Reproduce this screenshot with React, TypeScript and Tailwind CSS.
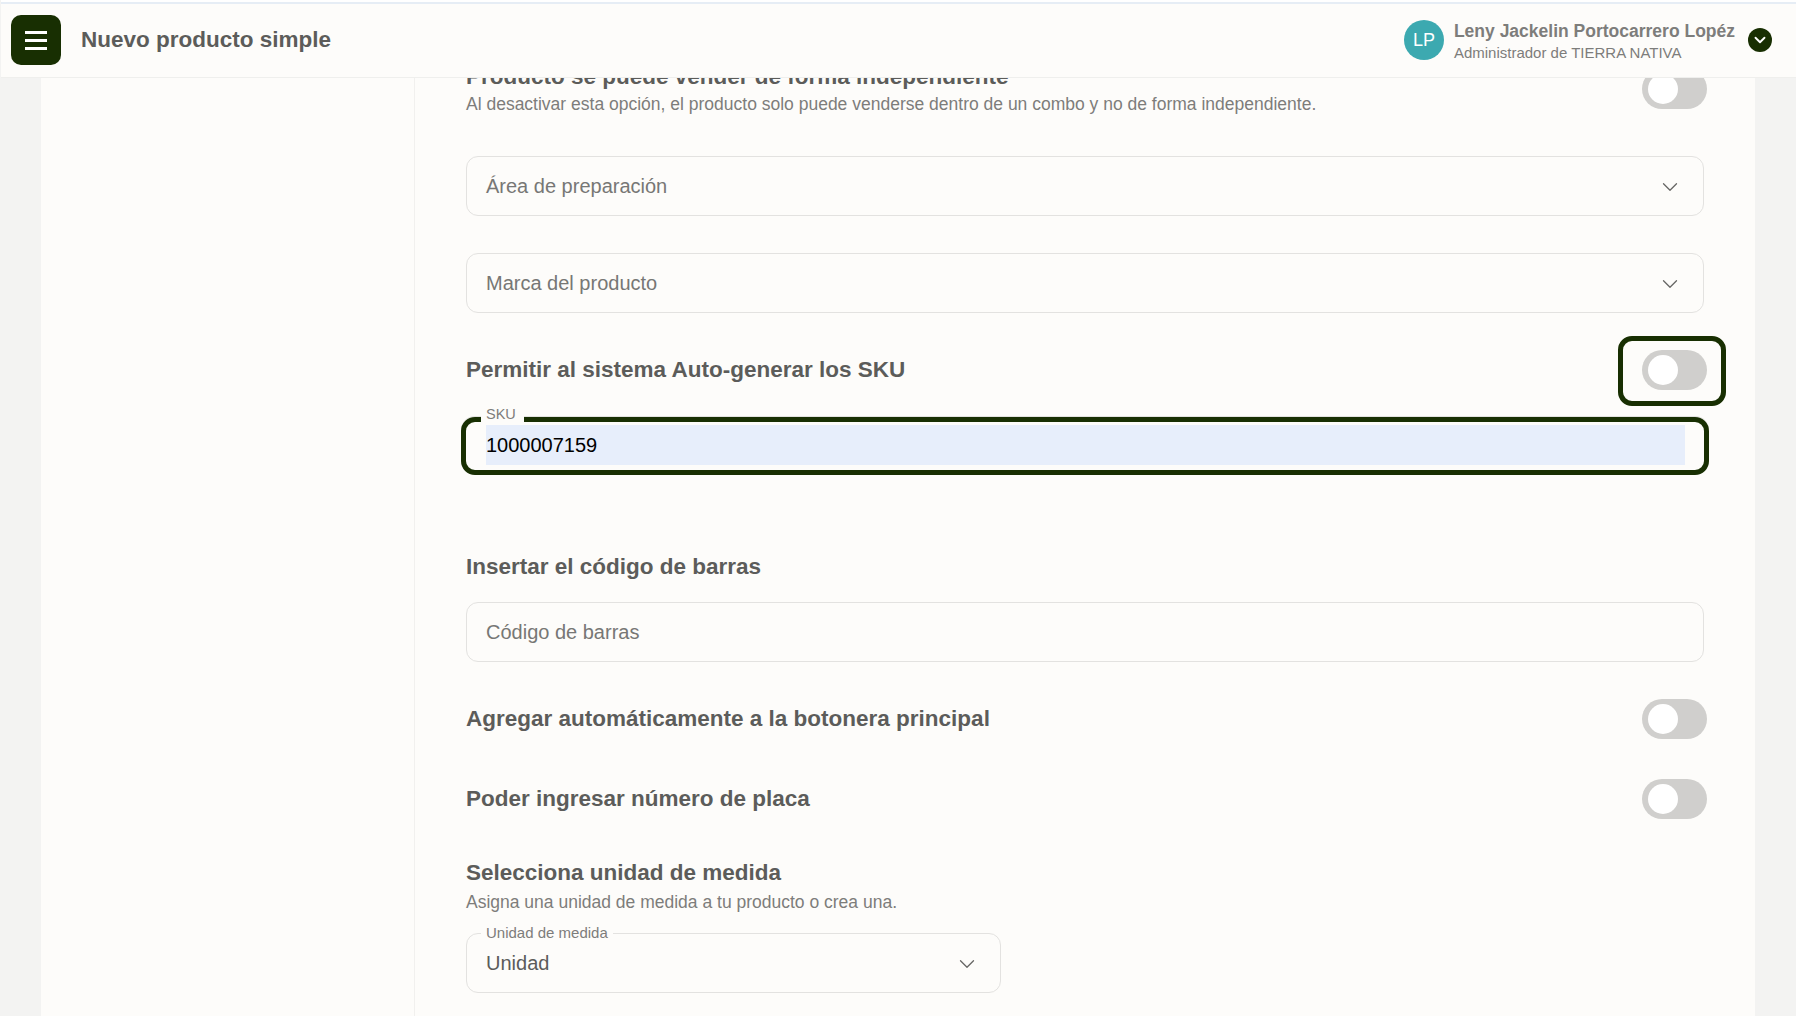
import { ChevronDown } from 'lucide-react'

const dark = 'bg-[#182f02]'

function Toggle() {
  return (
    <div className="flex h-[40px] w-[65px] shrink-0 items-center rounded-full bg-[#d0cfcd] pl-[6px]">
      <span className="h-[30px] w-[30px] rounded-full bg-white" />
    </div>
  )
}

function Heading({ children }: { children: React.ReactNode }) {
  return <h3 className="text-[22.5px] leading-[28px] font-bold text-[#5c5c5a]">{children}</h3>
}

function Note({ children }: { children: React.ReactNode }) {
  return <p className="text-[17.5px] leading-[22px] text-[#7d7d7b]">{children}</p>
}

function SelectBox({ label, className = '' }: { label: string; className?: string }) {
  return (
    <div className={`flex h-[60px] items-center justify-between rounded-[12px] border border-[#e3e2e0] pr-[20px] pl-[19px] ${className}`}>
      <span className="text-[20px] text-[#777775]">{label}</span>
      <ChevronDown size={26} strokeWidth={1.2} className="mt-[2px] text-[#666664]" />
    </div>
  )
}

export default function App() {
  return (
    <div className="flex h-screen flex-col overflow-hidden bg-[#f3f3f2] pl-[1px] font-['Liberation_Sans',Arial,sans-serif]">
      <header className="relative z-10 flex h-[78px] shrink-0 items-center border-t-[2px] border-b border-t-white border-b-[#efefed] bg-[#fdfcfa] pt-[1px] pr-[24px] pl-[10px] shadow-[inset_0_2px_0_#e6edf5]">
        <button type="button" className={`flex h-[50px] w-[50px] flex-col items-center justify-center gap-[5px] rounded-[10px] ${dark}`}>
          <span className="h-[3px] w-[22px] bg-white" />
          <span className="h-[3px] w-[22px] bg-white" />
          <span className="h-[3px] w-[22px] bg-white" />
        </button>
        <h1 className="ml-[20px] flex-1 text-[22.5px] font-bold text-[#5c5c5a]">Nuevo producto simple</h1>
        <div className="flex h-[40px] w-[40px] items-center justify-center rounded-full bg-[#3ca9b0] text-[18px] text-white">LP</div>
        <div className="ml-[10px] pt-[2px]">
          <div className="text-[17.5px] leading-[22px] font-bold text-[#7d7d7b]">Leny Jackelin Portocarrero Lopéz</div>
          <div className="text-[15px] leading-[21px] text-[#7d7d7b]">Administrador de TIERRA NATIVA</div>
        </div>
        <div className={`ml-[13px] flex h-[24px] w-[24px] items-center justify-center rounded-full ${dark}`}>
          <ChevronDown size={18} strokeWidth={2.5} className="text-white" />
        </div>
      </header>

      <div className="mr-[41px] ml-[40px] flex flex-1 bg-[#fdfcfa]">
        <aside className="w-[374px] shrink-0 border-r border-[#f1f0ee]" />
        <main className="-mt-[15px] flex-1 pr-[48px] pl-[51px]">
          <div className="flex justify-between">
            <div>
              <Heading>Producto se puede vender de forma independiente</Heading>
              <div className="pt-[2px]">
                <Note>Al desactivar esta opción, el producto solo puede venderse dentro de un combo y no de forma independiente.</Note>
              </div>
            </div>
            <div className="mt-[6px]"><Toggle /></div>
          </div>

          <SelectBox label="Área de preparación" className="mt-[41px] mr-[3px]" />
          <SelectBox label="Marca del producto" className="mt-[37px] mr-[3px]" />

          <div className="mt-[37px] flex h-[40px] items-center justify-between">
            <Heading>Permitir al sistema Auto-generar los SKU</Heading>
            <div className="relative"><Toggle />
              <span className="absolute -top-[14px] -right-[19px] -bottom-[16px] -left-[24px] rounded-[14px] border-[5px] border-[#182f02]" />
            </div>
          </div>

          <div className="relative mt-[27px] mr-[-2px] -ml-[5px] h-[58px] rounded-[14px] border-[5px] border-[#182f02] pt-[3px] pr-[19px] pl-[20px] shadow-[0_-1px_0_#e3e2e0]">
            <span className="absolute -top-[16px] left-[15px] bg-[#fdfcfa] pr-[8px] pl-[5px] text-[14.5px] leading-[17px] text-[#7d7d7b]">SKU</span>
            <div className="flex h-[40px] items-center bg-[#e7eefb] text-[20px] text-black">1000007159</div>
          </div>

          <div className="mt-[78px]"><Heading>Insertar el código de barras</Heading></div>
          <div className="mt-[21px] mr-[3px] flex h-[60px] items-center rounded-[12px] border border-[#e3e2e0] pl-[19px] text-[20px] text-[#777775]">Código de barras</div>

          <div className="mt-[37px] flex h-[40px] items-center justify-between">
            <Heading>Agregar automáticamente a la botonera principal</Heading>
            <Toggle />
          </div>
          <div className="mt-[40px] flex h-[40px] items-center justify-between">
            <Heading>Poder ingresar número de placa</Heading>
            <Toggle />
          </div>

          <div className="mt-[40px]"><Heading>Selecciona unidad de medida</Heading></div>
          <div className="pt-[4px]">
            <Note>Asigna una unidad de medida a tu producto o crea una.</Note>
          </div>

          <div className="relative mt-[20px] flex h-[60px] w-[535px] items-center justify-between rounded-[12px] border border-[#e3e2e0] pr-[20px] pl-[19px]">
            <span className="absolute -top-[10px] left-[14px] bg-[#fdfcfa] px-[5px] text-[15px] leading-[17px] text-[#7d7d7b]">Unidad de medida</span>
            <span className="text-[20px] text-[#5c5c5a]">Unidad</span>
            <ChevronDown size={26} strokeWidth={1.2} className="mt-[2px] text-[#666664]" />
          </div>
        </main>
      </div>
    </div>
  )
}
